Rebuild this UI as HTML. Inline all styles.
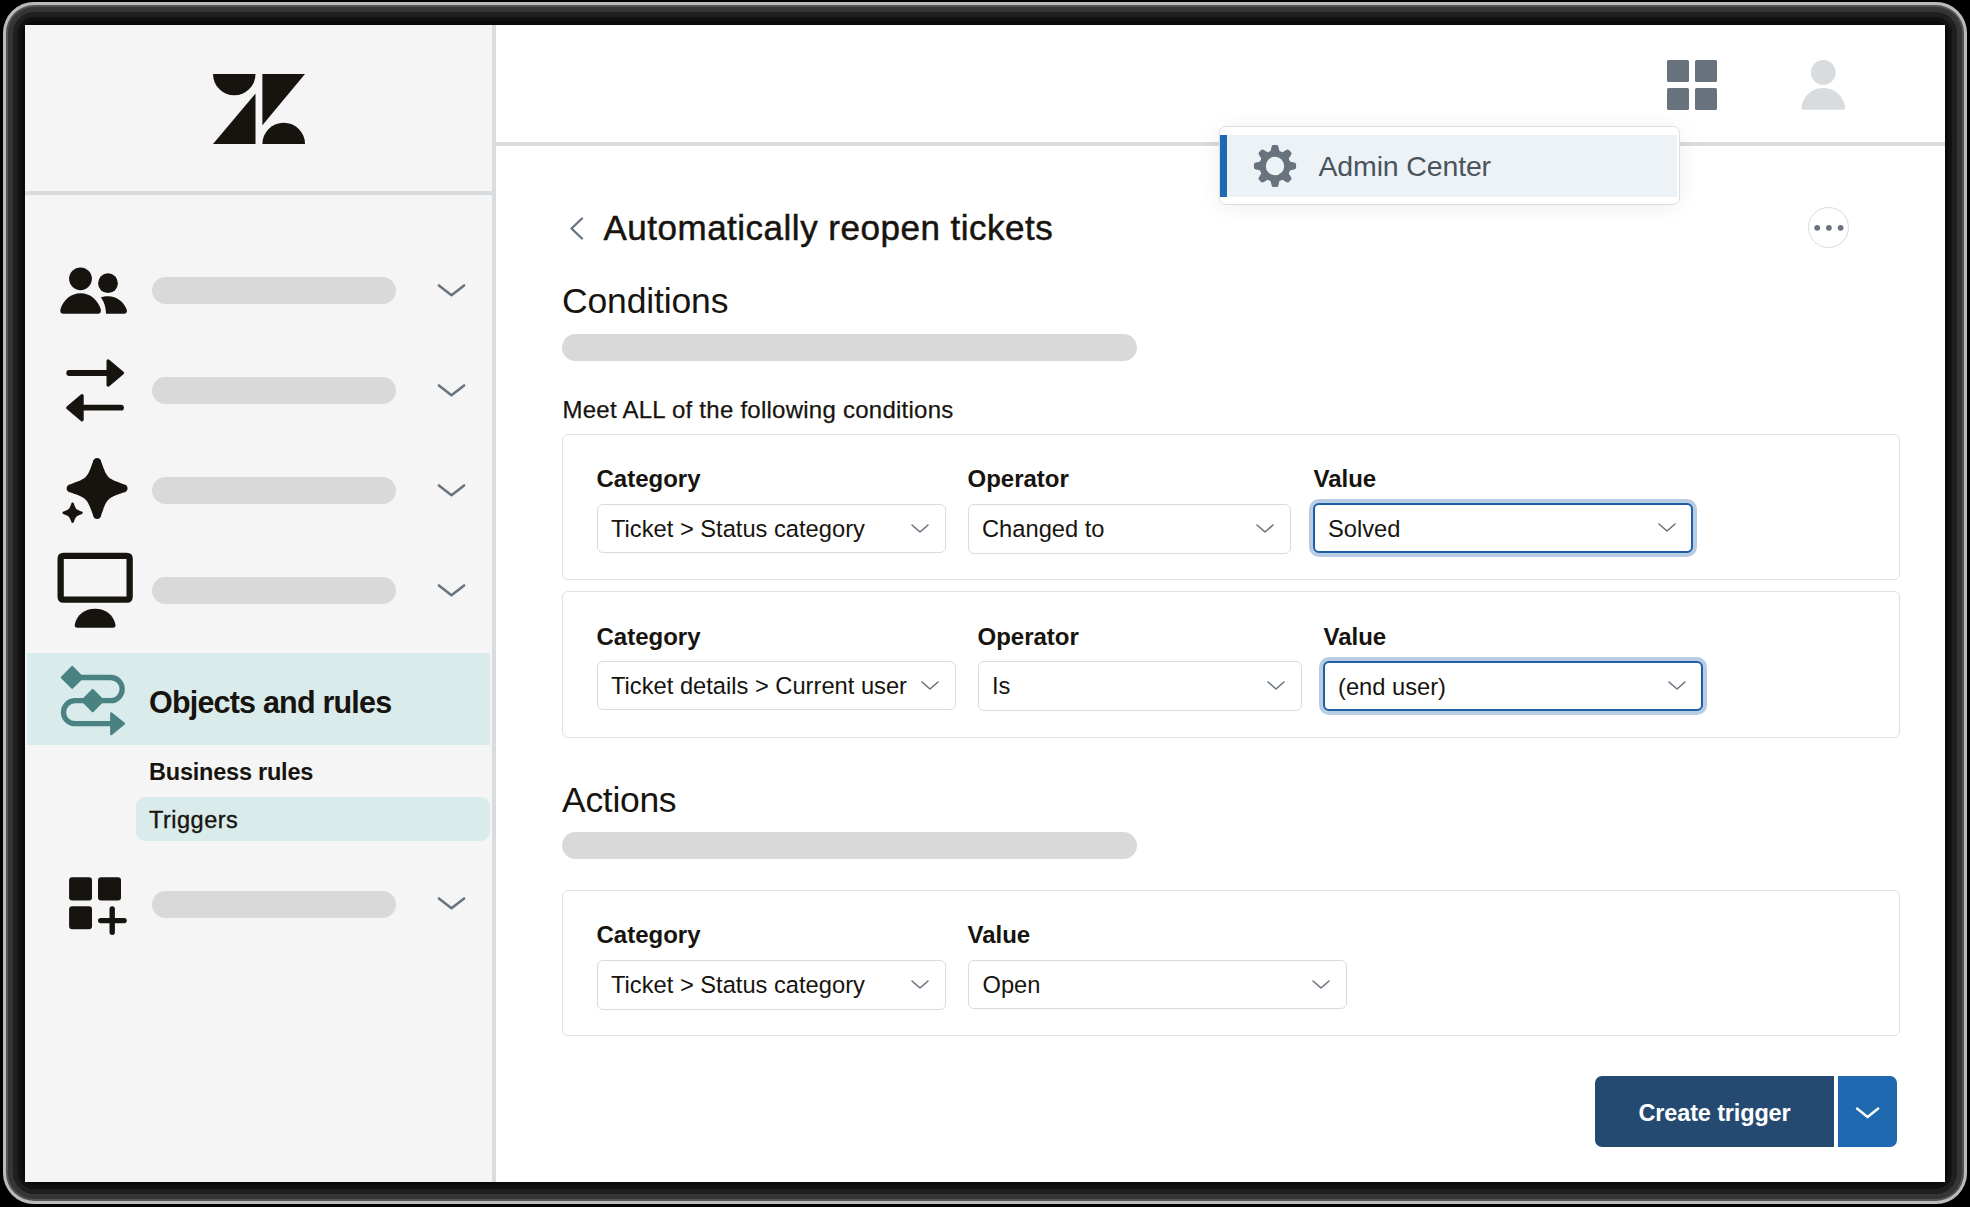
<!DOCTYPE html>
<html><head><meta charset="utf-8">
<style>
html,body{margin:0;padding:0;width:1970px;height:1207px;overflow:hidden;background:#000;}
*{box-sizing:border-box;}
body{position:relative;font-family:"Liberation Sans",sans-serif;color:#17140f;}
.a{position:absolute;}
.t{position:absolute;white-space:nowrap;line-height:1;}
#frame{position:absolute;left:3px;top:2px;width:1964px;height:1202px;border-radius:31px;background:#0a0a0a;box-shadow:inset 0 0 0 3px rgba(255,255,255,0.6), inset 0 0 0 5px rgba(255,255,255,0.15), inset 0 0 0 10px rgba(255,255,255,0.1), inset 0 0 0 15px rgba(255,255,255,0.06), inset 0 0 0 19px rgba(255,255,255,0.03);}
#app{position:absolute;left:25px;top:25px;width:1920px;height:1157px;background:#fff;overflow:hidden;}
#side{position:absolute;left:25px;top:25px;width:467px;height:1157px;background:#f5f5f5;}
.line{position:absolute;background:#d8dcde;}
.bar{position:absolute;height:27px;border-radius:13.5px;background:#d9d9d9;}
.chev{position:absolute;}
.box{position:absolute;border:1.5px solid #dfe1e3;border-radius:6px;background:#fff;}
.lab{position:absolute;white-space:nowrap;line-height:1;font-weight:700;font-size:24px;}
.sel{position:absolute;height:50px;border:1.5px solid #d8dcde;border-radius:6px;background:#fff;}
.sel.f{border:2px solid #1f5ea8;box-shadow:0 0 0 4px #b8cde3;}
.sel.f .v{left:12.5px;top:12.5px;}
.sel.f svg{margin-left:-0.5px;margin-top:-0.5px;}
.sel .v{position:absolute;left:13px;top:12.5px;font-size:23.7px;line-height:1;white-space:nowrap;}
.sel svg{position:absolute;top:19px;}
</style></head><body>
<div id="frame"></div>
<div id="app"></div>
<div id="side"></div>
<!-- sidebar lines -->
<div class="line" style="left:492px;top:25px;width:4px;height:1157px;"></div>
<div class="line" style="left:25px;top:191px;width:467px;height:4px;"></div>
<div class="line" style="left:496px;top:142px;width:1449px;height:4px;"></div>

<!-- sidebar content -->
<div class="a" style="left:27px;top:653px;width:462.5px;height:92px;background:#d9ebeb;"></div>
<div class="a" style="left:136px;top:797px;width:354px;height:44px;border-radius:9px;background:#d9ebeb;"></div>
<div class="bar" style="left:152px;top:277px;width:244px;"></div>
<div class="bar" style="left:152px;top:377px;width:244px;"></div>
<div class="bar" style="left:152px;top:477px;width:244px;"></div>
<div class="bar" style="left:152px;top:577px;width:244px;"></div>
<div class="bar" style="left:152px;top:891px;width:244px;"></div>
<svg class="a" style="left:0;top:0" width="1970" height="1207" viewBox="0 0 1970 1207">
 <g fill="#17140f">
  <!-- logo -->
  <path d="M213 74 H255.5 A21.25 21.25 0 0 1 213 74 Z"/>
  <path d="M213 144 H255.5 V93.5 Z"/>
  <path d="M262.4 74 H305 L262.4 125.3 Z"/>
  <path d="M262.4 144 H305 A21.3 21.3 0 0 0 262.4 144 Z"/>
  <!-- people -->
  <circle cx="80.5" cy="278.8" r="11.4"/>
  <circle cx="108" cy="283.2" r="9.9"/>
  <path d="M63.5 313.7 H97.7 Q101.5 313.7 100.8 309.5 C98 300 90 293.3 80.6 293.3 C71.2 293.3 63 300 60.4 309.5 Q59.7 313.7 63.5 313.7 Z"/>
  <path d="M106 313.7 H123.8 Q127.6 313.7 126.8 309.8 C124 302 117 296.2 108 296.2 C105 296.2 102.8 296.7 100.8 297.5 C104 301.5 105.8 306.5 106 313.7 Z"/>
  <!-- arrows -->
  <path d="M108.2 361 L122.4 373 L108.2 385 Z" stroke="#17140f" stroke-width="3.4" stroke-linejoin="round"/>
  <path d="M82 395.7 L67.8 407.7 L82 419.7 Z" stroke="#17140f" stroke-width="3.4" stroke-linejoin="round"/>
  <path d="M69.2 373 H108 M82 407.7 H121" stroke="#17140f" stroke-width="5.8" stroke-linecap="round"/>
  <!-- sparkle -->
  <path d="M92.90 462.10 A4.20 4.20 0 0 1 101.30 462.10 C107.30 478.40 107.10 478.20 123.40 484.20 A4.20 4.20 0 0 1 123.40 492.60 C107.10 498.60 107.30 498.40 101.30 514.70 A4.20 4.20 0 0 1 92.90 514.70 C86.90 498.40 87.10 498.60 70.80 492.60 A4.20 4.20 0 0 1 70.80 484.20 C87.10 478.20 86.90 478.40 92.90 462.10 Z"/>
  <path d="M71.20 504.02 A1.40 1.40 0 0 1 74.00 504.02 C76.01 509.46 75.94 509.39 81.38 511.40 A1.40 1.40 0 0 1 81.38 514.20 C75.94 516.21 76.01 516.14 74.00 521.58 A1.40 1.40 0 0 1 71.20 521.58 C69.19 516.14 69.26 516.21 63.82 514.20 A1.40 1.40 0 0 1 63.82 511.40 C69.26 509.39 69.19 509.46 71.20 504.02 Z"/>
  <!-- monitor -->
  <path fill-rule="evenodd" d="M63.5 552.8 H126.8 Q132.8 552.8 132.8 558.8 V596.8 Q132.8 602.8 126.8 602.8 H63.5 Q57.5 602.8 57.5 596.8 V558.8 Q57.5 552.8 63.5 552.8 Z M63.8 559.1 V596.5 H126.5 V559.1 Z"/>
  <path d="M77.5 627.8 H112.7 Q116 627.8 115.4 624.5 C113.5 615 105.5 608.8 95.1 608.8 C84.7 608.8 76.7 615 74.8 624.5 Q74.2 627.8 77.5 627.8 Z"/>
  <!-- apps -->
  <rect x="69.1" y="877.3" width="22.9" height="23.3" rx="3"/>
  <rect x="98" y="877.3" width="23" height="23.3" rx="3"/>
  <rect x="69.1" y="906.2" width="22.9" height="23" rx="3"/>
 </g>
 <path d="M112.2 909 V932.3 M100.7 920.6 H124.1" stroke="#17140f" stroke-width="5.4" stroke-linecap="round" fill="none"/>
 <!-- objects and rules icon -->
 <g fill="#4a8283" stroke="#4a8283" stroke-width="2.2" stroke-linejoin="round">
  <path d="M72.2 667 L82.5 677.4 L72.2 687.8 L61.9 677.4 Z"/>
  <path d="M92.7 690 L103.2 700.6 L92.7 711.2 L82.2 700.6 Z"/>
  <path d="M111.2 713.3 L124 723.7 L111.2 734.1 Z"/>
 </g>
 <path d="M80 677.5 H110.6 A11.6 11.6 0 0 1 110.6 700.7 H75 A11.5 11.5 0 0 0 75 723.7 H112" stroke="#4a8283" stroke-width="5.3" fill="none"/>
 <!-- sidebar chevrons -->
 <g stroke="#68737d" stroke-width="2.5" stroke-linecap="round" stroke-linejoin="round" fill="none">
  <path d="M438.9 285.4 L451.5 295.3 L464.1 285.4"/>
  <path d="M438.9 385.4 L451.5 395.3 L464.1 385.4"/>
  <path d="M438.9 485.4 L451.5 495.3 L464.1 485.4"/>
  <path d="M438.9 585.4 L451.5 595.3 L464.1 585.4"/>
  <path d="M438.9 898.4 L451.5 908.3 L464.1 898.4"/>
 </g>
</svg>
<div class="t" style="left:149px;top:686.5px;font-size:30.5px;font-weight:700;letter-spacing:-0.8px;">Objects and rules</div>
<div class="t" style="left:149px;top:761.2px;font-size:23.5px;font-weight:700;letter-spacing:-0.22px;">Business rules</div>
<div class="t" style="left:149px;top:809.2px;font-size:23.5px;letter-spacing:0.5px;-webkit-text-stroke:0.35px #17140f;">Triggers</div>

<!-- header -->
<svg class="a" style="left:0;top:0" width="1970" height="260" viewBox="0 0 1970 260">
 <g fill="#68737d">
  <rect x="1667" y="60" width="22" height="22" rx="1.5"/>
  <rect x="1695" y="60" width="22" height="22" rx="1.5"/>
  <rect x="1667" y="88" width="22" height="22" rx="1.5"/>
  <rect x="1695" y="88" width="22" height="22" rx="1.5"/>
 </g>
 <g fill="#d8dcde">
  <circle cx="1823.3" cy="72.4" r="12.4"/>
  <path d="M1804 109.8 H1842.5 Q1845.5 109.8 1845 106.5 C1843 95 1834 88 1823.3 88 C1812.6 88 1803.6 95 1801.6 106.5 Q1801.1 109.8 1804 109.8 Z"/>
 </g>
</svg>
<div class="a" style="left:1219px;top:126px;width:461px;height:79px;background:#fff;border:1px solid #dcdfe2;border-radius:7px;box-shadow:0 2px 22px rgba(0,0,0,0.075);"></div>
<div class="a" style="left:1220px;top:135px;width:457px;height:62px;background:#edf2f7;"></div>
<div class="a" style="left:1220px;top:135px;width:7px;height:62px;background:#1f69b0;"></div>
<svg class="a" style="left:1249.5px;top:141.2px" width="50" height="50" viewBox="-24.4 -24.4 48.8 48.8">
 <path fill="#68737d" fill-rule="evenodd" d="M20.60 0.00 L20.60 0.18 L20.60 0.36 L20.59 0.54 L20.59 0.72 L20.58 0.90 L20.57 1.08 L20.56 1.26 L20.55 1.44 L20.54 1.62 L20.52 1.80 L20.51 1.97 L20.47 2.15 L20.38 2.32 L20.26 2.49 L20.09 2.65 L19.89 2.80 L19.65 2.94 L19.38 3.07 L19.08 3.19 L18.76 3.31 L18.42 3.41 L18.07 3.51 L17.71 3.60 L17.34 3.69 L16.98 3.76 L16.63 3.84 L16.29 3.91 L15.96 3.98 L15.66 4.05 L15.39 4.12 L15.14 4.20 L14.93 4.28 L14.76 4.37 L14.62 4.47 L14.52 4.58 L14.46 4.70 L14.41 4.82 L14.37 4.95 L14.33 5.07 L14.28 5.20 L14.24 5.32 L14.19 5.45 L14.14 5.57 L14.09 5.69 L14.04 5.82 L13.99 5.94 L13.94 6.06 L13.89 6.18 L13.83 6.30 L13.78 6.42 L13.72 6.54 L13.66 6.66 L13.60 6.78 L13.54 6.90 L13.50 7.03 L13.50 7.18 L13.52 7.34 L13.59 7.53 L13.68 7.74 L13.80 7.97 L13.94 8.21 L14.10 8.47 L14.28 8.75 L14.47 9.04 L14.67 9.35 L14.87 9.66 L15.07 9.97 L15.26 10.29 L15.44 10.61 L15.60 10.93 L15.75 11.23 L15.87 11.53 L15.97 11.82 L16.04 12.09 L16.08 12.34 L16.08 12.57 L16.06 12.77 L15.99 12.95 L15.90 13.10 L15.78 13.24 L15.66 13.38 L15.55 13.51 L15.43 13.65 L15.31 13.78 L15.19 13.92 L15.07 14.05 L14.94 14.18 L14.82 14.31 L14.69 14.44 L14.57 14.57 L14.44 14.69 L14.31 14.82 L14.18 14.94 L14.05 15.07 L13.92 15.19 L13.78 15.31 L13.65 15.43 L13.51 15.55 L13.38 15.66 L13.24 15.78 L13.10 15.90 L12.95 15.99 L12.77 16.06 L12.57 16.08 L12.34 16.08 L12.09 16.04 L11.82 15.97 L11.53 15.87 L11.23 15.75 L10.93 15.60 L10.61 15.44 L10.29 15.26 L9.97 15.07 L9.66 14.87 L9.35 14.67 L9.04 14.47 L8.75 14.28 L8.47 14.10 L8.21 13.94 L7.97 13.80 L7.74 13.68 L7.53 13.59 L7.34 13.52 L7.18 13.50 L7.03 13.50 L6.90 13.54 L6.78 13.60 L6.66 13.66 L6.54 13.72 L6.42 13.78 L6.30 13.83 L6.18 13.89 L6.06 13.94 L5.94 13.99 L5.82 14.04 L5.69 14.09 L5.57 14.14 L5.45 14.19 L5.32 14.24 L5.20 14.28 L5.07 14.33 L4.95 14.37 L4.82 14.41 L4.70 14.46 L4.58 14.52 L4.47 14.62 L4.37 14.76 L4.28 14.93 L4.20 15.14 L4.12 15.39 L4.05 15.66 L3.98 15.96 L3.91 16.29 L3.84 16.63 L3.76 16.98 L3.69 17.34 L3.60 17.71 L3.51 18.07 L3.41 18.42 L3.31 18.76 L3.19 19.08 L3.07 19.38 L2.94 19.65 L2.80 19.89 L2.65 20.09 L2.49 20.26 L2.32 20.38 L2.15 20.47 L1.97 20.51 L1.80 20.52 L1.62 20.54 L1.44 20.55 L1.26 20.56 L1.08 20.57 L0.90 20.58 L0.72 20.59 L0.54 20.59 L0.36 20.60 L0.18 20.60 L0.00 20.60 L-0.18 20.60 L-0.36 20.60 L-0.54 20.59 L-0.72 20.59 L-0.90 20.58 L-1.08 20.57 L-1.26 20.56 L-1.44 20.55 L-1.62 20.54 L-1.80 20.52 L-1.97 20.51 L-2.15 20.47 L-2.32 20.38 L-2.49 20.26 L-2.65 20.09 L-2.80 19.89 L-2.94 19.65 L-3.07 19.38 L-3.19 19.08 L-3.31 18.76 L-3.41 18.42 L-3.51 18.07 L-3.60 17.71 L-3.69 17.34 L-3.76 16.98 L-3.84 16.63 L-3.91 16.29 L-3.98 15.96 L-4.05 15.66 L-4.12 15.39 L-4.20 15.14 L-4.28 14.93 L-4.37 14.76 L-4.47 14.62 L-4.58 14.52 L-4.70 14.46 L-4.82 14.41 L-4.95 14.37 L-5.07 14.33 L-5.20 14.28 L-5.32 14.24 L-5.45 14.19 L-5.57 14.14 L-5.69 14.09 L-5.82 14.04 L-5.94 13.99 L-6.06 13.94 L-6.18 13.89 L-6.30 13.83 L-6.42 13.78 L-6.54 13.72 L-6.66 13.66 L-6.78 13.60 L-6.90 13.54 L-7.03 13.50 L-7.18 13.50 L-7.34 13.52 L-7.53 13.59 L-7.74 13.68 L-7.97 13.80 L-8.21 13.94 L-8.47 14.10 L-8.75 14.28 L-9.04 14.47 L-9.35 14.67 L-9.66 14.87 L-9.97 15.07 L-10.29 15.26 L-10.61 15.44 L-10.93 15.60 L-11.23 15.75 L-11.53 15.87 L-11.82 15.97 L-12.09 16.04 L-12.34 16.08 L-12.57 16.08 L-12.77 16.06 L-12.95 15.99 L-13.10 15.90 L-13.24 15.78 L-13.38 15.66 L-13.51 15.55 L-13.65 15.43 L-13.78 15.31 L-13.92 15.19 L-14.05 15.07 L-14.18 14.94 L-14.31 14.82 L-14.44 14.69 L-14.57 14.57 L-14.69 14.44 L-14.82 14.31 L-14.94 14.18 L-15.07 14.05 L-15.19 13.92 L-15.31 13.78 L-15.43 13.65 L-15.55 13.51 L-15.66 13.38 L-15.78 13.24 L-15.90 13.10 L-15.99 12.95 L-16.06 12.77 L-16.08 12.57 L-16.08 12.34 L-16.04 12.09 L-15.97 11.82 L-15.87 11.53 L-15.75 11.23 L-15.60 10.93 L-15.44 10.61 L-15.26 10.29 L-15.07 9.97 L-14.87 9.66 L-14.67 9.35 L-14.47 9.04 L-14.28 8.75 L-14.10 8.47 L-13.94 8.21 L-13.80 7.97 L-13.68 7.74 L-13.59 7.53 L-13.52 7.34 L-13.50 7.18 L-13.50 7.03 L-13.54 6.90 L-13.60 6.78 L-13.66 6.66 L-13.72 6.54 L-13.78 6.42 L-13.83 6.30 L-13.89 6.18 L-13.94 6.06 L-13.99 5.94 L-14.04 5.82 L-14.09 5.69 L-14.14 5.57 L-14.19 5.45 L-14.24 5.32 L-14.28 5.20 L-14.33 5.07 L-14.37 4.95 L-14.41 4.82 L-14.46 4.70 L-14.52 4.58 L-14.62 4.47 L-14.76 4.37 L-14.93 4.28 L-15.14 4.20 L-15.39 4.12 L-15.66 4.05 L-15.96 3.98 L-16.29 3.91 L-16.63 3.84 L-16.98 3.76 L-17.34 3.69 L-17.71 3.60 L-18.07 3.51 L-18.42 3.41 L-18.76 3.31 L-19.08 3.19 L-19.38 3.07 L-19.65 2.94 L-19.89 2.80 L-20.09 2.65 L-20.26 2.49 L-20.38 2.32 L-20.47 2.15 L-20.51 1.97 L-20.52 1.80 L-20.54 1.62 L-20.55 1.44 L-20.56 1.26 L-20.57 1.08 L-20.58 0.90 L-20.59 0.72 L-20.59 0.54 L-20.60 0.36 L-20.60 0.18 L-20.60 0.00 L-20.60 -0.18 L-20.60 -0.36 L-20.59 -0.54 L-20.59 -0.72 L-20.58 -0.90 L-20.57 -1.08 L-20.56 -1.26 L-20.55 -1.44 L-20.54 -1.62 L-20.52 -1.80 L-20.51 -1.97 L-20.47 -2.15 L-20.38 -2.32 L-20.26 -2.49 L-20.09 -2.65 L-19.89 -2.80 L-19.65 -2.94 L-19.38 -3.07 L-19.08 -3.19 L-18.76 -3.31 L-18.42 -3.41 L-18.07 -3.51 L-17.71 -3.60 L-17.34 -3.69 L-16.98 -3.76 L-16.63 -3.84 L-16.29 -3.91 L-15.96 -3.98 L-15.66 -4.05 L-15.39 -4.12 L-15.14 -4.20 L-14.93 -4.28 L-14.76 -4.37 L-14.62 -4.47 L-14.52 -4.58 L-14.46 -4.70 L-14.41 -4.82 L-14.37 -4.95 L-14.33 -5.07 L-14.28 -5.20 L-14.24 -5.32 L-14.19 -5.45 L-14.14 -5.57 L-14.09 -5.69 L-14.04 -5.82 L-13.99 -5.94 L-13.94 -6.06 L-13.89 -6.18 L-13.83 -6.30 L-13.78 -6.42 L-13.72 -6.54 L-13.66 -6.66 L-13.60 -6.78 L-13.54 -6.90 L-13.50 -7.03 L-13.50 -7.18 L-13.52 -7.34 L-13.59 -7.53 L-13.68 -7.74 L-13.80 -7.97 L-13.94 -8.21 L-14.10 -8.47 L-14.28 -8.75 L-14.47 -9.04 L-14.67 -9.35 L-14.87 -9.66 L-15.07 -9.97 L-15.26 -10.29 L-15.44 -10.61 L-15.60 -10.93 L-15.75 -11.23 L-15.87 -11.53 L-15.97 -11.82 L-16.04 -12.09 L-16.08 -12.34 L-16.08 -12.57 L-16.06 -12.77 L-15.99 -12.95 L-15.90 -13.10 L-15.78 -13.24 L-15.66 -13.38 L-15.55 -13.51 L-15.43 -13.65 L-15.31 -13.78 L-15.19 -13.92 L-15.07 -14.05 L-14.94 -14.18 L-14.82 -14.31 L-14.69 -14.44 L-14.57 -14.57 L-14.44 -14.69 L-14.31 -14.82 L-14.18 -14.94 L-14.05 -15.07 L-13.92 -15.19 L-13.78 -15.31 L-13.65 -15.43 L-13.51 -15.55 L-13.38 -15.66 L-13.24 -15.78 L-13.10 -15.90 L-12.95 -15.99 L-12.77 -16.06 L-12.57 -16.08 L-12.34 -16.08 L-12.09 -16.04 L-11.82 -15.97 L-11.53 -15.87 L-11.23 -15.75 L-10.93 -15.60 L-10.61 -15.44 L-10.29 -15.26 L-9.97 -15.07 L-9.66 -14.87 L-9.35 -14.67 L-9.04 -14.47 L-8.75 -14.28 L-8.47 -14.10 L-8.21 -13.94 L-7.97 -13.80 L-7.74 -13.68 L-7.53 -13.59 L-7.34 -13.52 L-7.18 -13.50 L-7.03 -13.50 L-6.90 -13.54 L-6.78 -13.60 L-6.66 -13.66 L-6.54 -13.72 L-6.42 -13.78 L-6.30 -13.83 L-6.18 -13.89 L-6.06 -13.94 L-5.94 -13.99 L-5.82 -14.04 L-5.69 -14.09 L-5.57 -14.14 L-5.45 -14.19 L-5.32 -14.24 L-5.20 -14.28 L-5.07 -14.33 L-4.95 -14.37 L-4.82 -14.41 L-4.70 -14.46 L-4.58 -14.52 L-4.47 -14.62 L-4.37 -14.76 L-4.28 -14.93 L-4.20 -15.14 L-4.12 -15.39 L-4.05 -15.66 L-3.98 -15.96 L-3.91 -16.29 L-3.84 -16.63 L-3.76 -16.98 L-3.69 -17.34 L-3.60 -17.71 L-3.51 -18.07 L-3.41 -18.42 L-3.31 -18.76 L-3.19 -19.08 L-3.07 -19.38 L-2.94 -19.65 L-2.80 -19.89 L-2.65 -20.09 L-2.49 -20.26 L-2.32 -20.38 L-2.15 -20.47 L-1.97 -20.51 L-1.80 -20.52 L-1.62 -20.54 L-1.44 -20.55 L-1.26 -20.56 L-1.08 -20.57 L-0.90 -20.58 L-0.72 -20.59 L-0.54 -20.59 L-0.36 -20.60 L-0.18 -20.60 L-0.00 -20.60 L0.18 -20.60 L0.36 -20.60 L0.54 -20.59 L0.72 -20.59 L0.90 -20.58 L1.08 -20.57 L1.26 -20.56 L1.44 -20.55 L1.62 -20.54 L1.80 -20.52 L1.97 -20.51 L2.15 -20.47 L2.32 -20.38 L2.49 -20.26 L2.65 -20.09 L2.80 -19.89 L2.94 -19.65 L3.07 -19.38 L3.19 -19.08 L3.31 -18.76 L3.41 -18.42 L3.51 -18.07 L3.60 -17.71 L3.69 -17.34 L3.76 -16.98 L3.84 -16.63 L3.91 -16.29 L3.98 -15.96 L4.05 -15.66 L4.12 -15.39 L4.20 -15.14 L4.28 -14.93 L4.37 -14.76 L4.47 -14.62 L4.58 -14.52 L4.70 -14.46 L4.82 -14.41 L4.95 -14.37 L5.07 -14.33 L5.20 -14.28 L5.32 -14.24 L5.45 -14.19 L5.57 -14.14 L5.69 -14.09 L5.82 -14.04 L5.94 -13.99 L6.06 -13.94 L6.18 -13.89 L6.30 -13.83 L6.42 -13.78 L6.54 -13.72 L6.66 -13.66 L6.78 -13.60 L6.90 -13.54 L7.03 -13.50 L7.18 -13.50 L7.34 -13.52 L7.53 -13.59 L7.74 -13.68 L7.97 -13.80 L8.21 -13.94 L8.47 -14.10 L8.75 -14.28 L9.04 -14.47 L9.35 -14.67 L9.66 -14.87 L9.97 -15.07 L10.29 -15.26 L10.61 -15.44 L10.93 -15.60 L11.23 -15.75 L11.53 -15.87 L11.82 -15.97 L12.09 -16.04 L12.34 -16.08 L12.57 -16.08 L12.77 -16.06 L12.95 -15.99 L13.10 -15.90 L13.24 -15.78 L13.38 -15.66 L13.51 -15.55 L13.65 -15.43 L13.78 -15.31 L13.92 -15.19 L14.05 -15.07 L14.18 -14.94 L14.31 -14.82 L14.44 -14.69 L14.57 -14.57 L14.69 -14.44 L14.82 -14.31 L14.94 -14.18 L15.07 -14.05 L15.19 -13.92 L15.31 -13.78 L15.43 -13.65 L15.55 -13.51 L15.66 -13.38 L15.78 -13.24 L15.90 -13.10 L15.99 -12.95 L16.06 -12.77 L16.08 -12.57 L16.08 -12.34 L16.04 -12.09 L15.97 -11.82 L15.87 -11.53 L15.75 -11.23 L15.60 -10.93 L15.44 -10.61 L15.26 -10.29 L15.07 -9.97 L14.87 -9.66 L14.67 -9.35 L14.47 -9.04 L14.28 -8.75 L14.10 -8.47 L13.94 -8.21 L13.80 -7.97 L13.68 -7.74 L13.59 -7.53 L13.52 -7.34 L13.50 -7.18 L13.50 -7.03 L13.54 -6.90 L13.60 -6.78 L13.66 -6.66 L13.72 -6.54 L13.78 -6.42 L13.83 -6.30 L13.89 -6.18 L13.94 -6.06 L13.99 -5.94 L14.04 -5.82 L14.09 -5.69 L14.14 -5.57 L14.19 -5.45 L14.24 -5.32 L14.28 -5.20 L14.33 -5.07 L14.37 -4.95 L14.41 -4.82 L14.46 -4.70 L14.52 -4.58 L14.62 -4.47 L14.76 -4.37 L14.93 -4.28 L15.14 -4.20 L15.39 -4.12 L15.66 -4.05 L15.96 -3.98 L16.29 -3.91 L16.63 -3.84 L16.98 -3.76 L17.34 -3.69 L17.71 -3.60 L18.07 -3.51 L18.42 -3.41 L18.76 -3.31 L19.08 -3.19 L19.38 -3.07 L19.65 -2.94 L19.89 -2.80 L20.09 -2.65 L20.26 -2.49 L20.38 -2.32 L20.47 -2.15 L20.51 -1.97 L20.52 -1.80 L20.54 -1.62 L20.55 -1.44 L20.56 -1.26 L20.57 -1.08 L20.58 -0.90 L20.59 -0.72 L20.59 -0.54 L20.60 -0.36 L20.60 -0.18 Z M9.0 0 A9.0 9.0 0 1 0 -9.0 0 A9.0 9.0 0 1 0 9.0 0 Z"/>
</svg>
<div class="t" style="left:1318.5px;top:152px;font-size:28.5px;color:#49545c;letter-spacing:-0.15px;">Admin Center</div>
<div class="a" style="left:1808px;top:207px;width:41px;height:41px;border-radius:50%;border:1.2px solid #d8dcde;background:#fff;"></div>
<svg class="a" style="left:0;top:0" width="1970" height="1207" viewBox="0 0 1970 1207">
 <g fill="#68737d"><circle cx="1817.2" cy="227.8" r="2.9"/><circle cx="1828.9" cy="227.8" r="2.9"/><circle cx="1840.6" cy="227.8" r="2.9"/></g>
 <path d="M582 218.5 L571.5 228.5 L582 238.5" stroke="#68737d" stroke-width="2.4" fill="none" stroke-linecap="round" stroke-linejoin="round"/>
</svg>
<div class="t" style="left:603.5px;top:209.6px;font-size:35px;letter-spacing:0.5px;-webkit-text-stroke:0.5px #17140f;">Automatically reopen tickets</div>
<div class="t" style="left:562px;top:284.2px;font-size:35.5px;letter-spacing:-0.15px;">Conditions</div>
<div class="bar" style="left:562px;top:334px;width:575px;"></div>
<div class="t" style="left:562.5px;top:397.7px;font-size:24px;letter-spacing:0.25px;-webkit-text-stroke:0.25px #17140f;">Meet ALL of the following conditions</div>
<div class="box" style="left:562px;top:433.8px;width:1337.5px;height:146.5px;"></div>
<div class="box" style="left:562px;top:590.9px;width:1337.5px;height:146.7px;"></div>
<div class="box" style="left:562px;top:889.6px;width:1337.5px;height:146.8px;"></div>
<div class="lab" style="left:596.5px;top:467.4px;">Category</div>
<div class="lab" style="left:967.5px;top:467.4px;">Operator</div>
<div class="lab" style="left:1313.5px;top:467.4px;">Value</div>
<div class="lab" style="left:596.5px;top:624.8px;">Category</div>
<div class="lab" style="left:977.5px;top:624.8px;">Operator</div>
<div class="lab" style="left:1323.5px;top:624.8px;">Value</div>
<div class="t" style="left:562px;top:783.2px;font-size:35.5px;letter-spacing:-0.3px;">Actions</div>
<div class="bar" style="left:562px;top:832px;width:575px;"></div>
<div class="lab" style="left:596.5px;top:923.2px;">Category</div>
<div class="lab" style="left:967.5px;top:923.2px;">Value</div>
<!--SELS-->
<div class="sel" style="left:596.5px;top:503.5px;width:349.0px;height:49.5px;"><div class="v" style="left:13.50px;top:13.65px">Ticket &gt; Status category</div><svg style="left:312.00px;top:18.30px" width="20" height="11" viewBox="0 0 20 11"><path d="M2 2 L10.0 9 L18 2" stroke="#68737d" stroke-width="1.6" fill="none" stroke-linecap="round" stroke-linejoin="round"/></svg></div>
<div class="sel" style="left:967.5px;top:503.5px;width:323.5px;height:50.0px;"><div class="v" style="left:13.50px;top:13.65px">Changed to</div><svg style="left:286.50px;top:18.30px" width="20" height="11" viewBox="0 0 20 11"><path d="M2 2 L10.0 9 L18 2" stroke="#68737d" stroke-width="1.6" fill="none" stroke-linecap="round" stroke-linejoin="round"/></svg></div>
<div class="sel f" style="left:1313px;top:503px;width:380px;height:50px;"><div class="v" style="left:13.00px;top:13.15px">Solved</div><svg style="left:342.50px;top:17.80px" width="20" height="11" viewBox="0 0 20 11"><path d="M2 2 L10.0 9 L18 2" stroke="#68737d" stroke-width="1.6" fill="none" stroke-linecap="round" stroke-linejoin="round"/></svg></div>
<div class="sel" style="left:596.5px;top:660.5px;width:359.0px;height:49.5px;"><div class="v" style="left:13.50px;top:13.65px">Ticket details &gt; Current user</div><svg style="left:322.00px;top:18.30px" width="20" height="11" viewBox="0 0 20 11"><path d="M2 2 L10.0 9 L18 2" stroke="#68737d" stroke-width="1.6" fill="none" stroke-linecap="round" stroke-linejoin="round"/></svg></div>
<div class="sel" style="left:977.5px;top:660.5px;width:324.5px;height:50.0px;"><div class="v" style="left:13.50px;top:13.65px">Is</div><svg style="left:287.50px;top:18.30px" width="20" height="11" viewBox="0 0 20 11"><path d="M2 2 L10.0 9 L18 2" stroke="#68737d" stroke-width="1.6" fill="none" stroke-linecap="round" stroke-linejoin="round"/></svg></div>
<div class="sel f" style="left:1323px;top:661px;width:380px;height:50px;"><div class="v" style="left:13.00px;top:13.15px">(end user)</div><svg style="left:342.50px;top:17.80px" width="20" height="11" viewBox="0 0 20 11"><path d="M2 2 L10.0 9 L18 2" stroke="#68737d" stroke-width="1.6" fill="none" stroke-linecap="round" stroke-linejoin="round"/></svg></div>
<div class="sel" style="left:596.5px;top:959.5px;width:349.0px;height:50.0px;"><div class="v" style="left:13.50px;top:13.65px">Ticket &gt; Status category</div><svg style="left:312.00px;top:18.30px" width="20" height="11" viewBox="0 0 20 11"><path d="M2 2 L10.0 9 L18 2" stroke="#68737d" stroke-width="1.6" fill="none" stroke-linecap="round" stroke-linejoin="round"/></svg></div>
<div class="sel" style="left:968px;top:959.5px;width:378.5px;height:49.0px;"><div class="v" style="left:13.50px;top:13.65px">Open</div><svg style="left:341.50px;top:18.30px" width="20" height="11" viewBox="0 0 20 11"><path d="M2 2 L10.0 9 L18 2" stroke="#68737d" stroke-width="1.6" fill="none" stroke-linecap="round" stroke-linejoin="round"/></svg></div>
<!--/SELS-->

<div class="a" style="left:1595px;top:1076px;width:239px;height:70.5px;background:#254a72;border-radius:7px 0 0 7px;"></div>
<div class="a" style="left:1838px;top:1076px;width:59px;height:70.5px;background:#1f69b0;border-radius:0 7px 7px 0;"></div>
<div class="t" style="left:1638.5px;top:1101.8px;font-size:23.5px;font-weight:700;color:#fff;letter-spacing:-0.15px;">Create trigger</div>
<svg class="a" style="left:1850px;top:1100px" width="36" height="26" viewBox="0 0 36 26"><path d="M7 8.5 L17.6 17 L28.2 8.5" stroke="#fff" stroke-width="2.4" fill="none" stroke-linecap="round" stroke-linejoin="round"/></svg>
</body></html>
